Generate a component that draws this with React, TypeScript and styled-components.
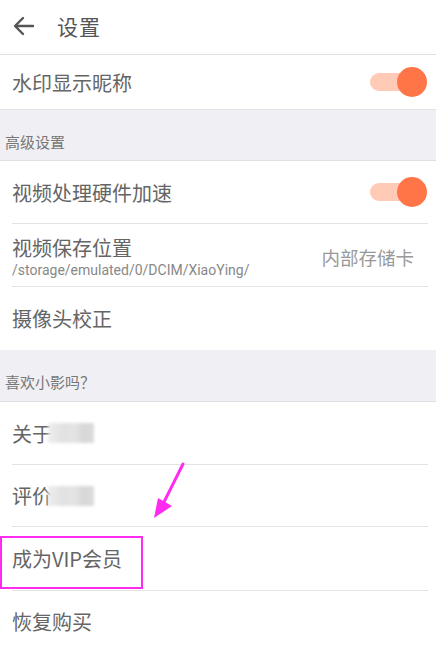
import React from "react";
import styled, { createGlobalStyle } from "styled-components";

const Global = createGlobalStyle`
  html, body { margin: 0; padding: 0; background: #fff; }
  body { font-family: "Noto Sans CJK SC", "Noto Sans", Roboto, sans-serif; }
  * { box-sizing: border-box; }
`;

const Page = styled.div`
  width: 436px;
  height: 651px;
  overflow: hidden;
  position: relative;
  background: #fff;
`;

const Header = styled.div`
  height: 55px;
  display: flex;
  align-items: center;
  padding-left: 12px;
  padding-bottom: 3px;
  border-bottom: 1px solid #e2e2e6;
`;

const BackIcon = styled.svg`
  width: 24px;
  height: 24px;
  margin-right: 21px;
`;

const Title = styled.div`
  font-size: 21px;
  color: #555;
  letter-spacing: 1px;
`;

const Section = styled.div<{ h: number }>`
  height: ${(p) => p.h}px;
  background: #f0f0f4;
  display: flex;
  align-items: flex-end;
  padding: 0 0 ${(p) => (p.h > 51 ? 9 : 8)}px 5px;
  font-size: 15px;
  color: #777;
  border-bottom: 1px solid #e0e0e4;
`;

const Row = styled.div<{ h: number; full?: boolean; last?: boolean }>`
  height: ${(p) => p.h}px;
  margin-left: ${(p) => (p.full ? 0 : 12)}px;
  margin-right: ${(p) => (p.full ? 0 : 8)}px;
  padding-left: ${(p) => (p.full ? 12 : 0)}px;
  padding-right: ${(p) => (p.full ? 22 : 14)}px;
  display: flex;
  align-items: center;
  justify-content: space-between;
  border-bottom: ${(p) => (p.last ? "none" : "1px solid #e3e3e3")};
  position: relative;
`;

const Label = styled.div`
  font-size: 20px;
  color: #656565;
  display: flex;
  align-items: center;
`;

const LabelStack = styled.div`
  display: flex;
  flex-direction: column;
  gap: 0px;
`;

const Sub = styled.div`
  font-size: 14px;
  color: #888;
  font-family: Roboto, "Noto Sans", sans-serif;
`;

const Value = styled.div`
  font-size: 18.5px;
  color: #999;
  margin-right: 0px;
  margin-top: 4px;
`;

const Track = styled.div`
  width: 44px;
  height: 18px;
  border-radius: 9px;
  background: #ffcab6;
  position: relative;
`;

const Thumb = styled.div`
  position: absolute;
  width: 30px;
  height: 30px;
  border-radius: 50%;
  background: #ff7548;
  right: -13px;
  top: -6px;
`;

const Blur = styled.span`
  display: inline-block;
  width: 46px;
  height: 20px;
  margin-left: -4px;
  background: linear-gradient(90deg, #ececec 0%, #dedede 35%, #e2e2e2 55%, #d2d2d2 80%, #d9d9d9 100%);
  filter: blur(1.5px);
  opacity: 0.9;
`;

const Highlight = styled.div`
  position: absolute;
  left: -12px;
  top: 9px;
  width: 143px;
  height: 53px;
  border: 2px solid #ff2bf0;
`;

const Arrow = styled.svg`
  position: absolute;
  left: 150px;
  top: 460px;
  width: 40px;
  height: 62px;
`;

function Toggle() {
  return (
    <Track>
      <Thumb />
    </Track>
  );
}

export default function App() {
  return (
    <Page>
      <Global />
      <Header>
        <BackIcon viewBox="0 0 24 24" fill="none" stroke="#555" strokeWidth="2.4" strokeLinecap="round" strokeLinejoin="round">
          <path d="M21 12H4M11 4l-8 8 8 8" />
        </BackIcon>
        <Title>设置</Title>
      </Header>
      <Row h={55} full>
        <Label>水印显示昵称</Label>
        <Toggle />
      </Row>
      <Section h={51}>高级设置</Section>
      <Row h={63}>
        <Label>视频处理硬件加速</Label>
        <Toggle />
      </Row>
      <Row h={63}>
        <LabelStack>
          <Label>视频保存位置</Label>
          <Sub>/storage/emulated/0/DCIM/XiaoYing/</Sub>
        </LabelStack>
        <Value>内部存储卡</Value>
      </Row>
      <Row h={63} last>
        <Label>摄像头校正</Label>
      </Row>
      <Section h={52}>喜欢小影吗？</Section>
      <Row h={63}>
        <Label>
          关于<Blur />
        </Label>
      </Row>
      <Row h={62}>
        <Label>
          评价<Blur />
        </Label>
      </Row>
      <Row h={64}>
        <Highlight />
        <Label>成为VIP会员</Label>
      </Row>
      <Row h={60} last>
        <Label>恢复购买</Label>
      </Row>
      <Arrow viewBox="0 0 40 62">
        <path d="M33 4 L13 44" stroke="#ff2bf0" strokeWidth="3" strokeLinecap="round" />
        <path d="M4 58 L8 38 L22 46 Z" fill="#ff2bf0" />
      </Arrow>
    </Page>
  );
}
